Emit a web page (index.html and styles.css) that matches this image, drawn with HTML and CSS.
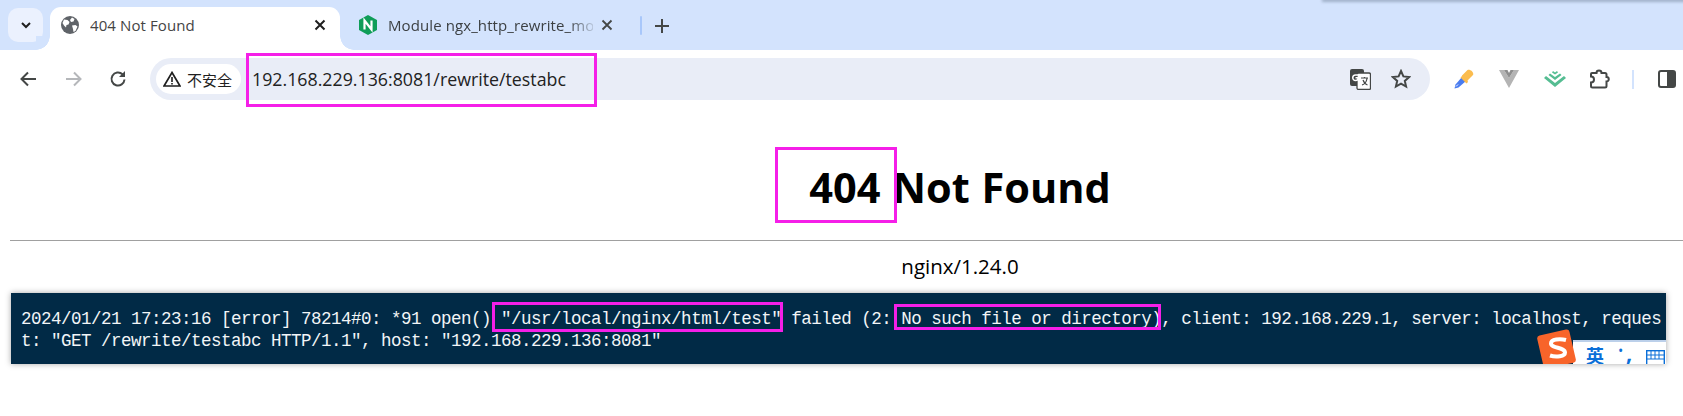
FILE: index.html
```html
<!DOCTYPE html>
<html lang="zh">
<head>
<meta charset="utf-8">
<title>404 Not Found</title>
<link rel="stylesheet" href="styles.css">
</head>
<body>
<div class="window-shadow"></div>
<header class="tabstrip">
  <button class="tab-menu"><svg width="14" height="14" viewBox="0 0 14 14"><path d="M3 5l4 4 4-4" fill="none" stroke="#1f1f1f" stroke-width="2"/></svg></button>
  <div class="tab tab-active">
    <svg class="fav" width="18" height="18" viewBox="0 0 18 18"><circle cx="9" cy="9" r="9" fill="#5f6368"/><path d="M3 3.500l3.500.5 2 2-1 2.500-2 .5-.5 2.500L3 9.500 1.500 7zM11 1.500l2.500 1.500-1 2.500-2.500.5-1-2zM11 9.500l3.500-.5 2 1.500-2 4.500-2 1-.5-3z" fill="#fff"/></svg>
    <span class="tab-title">404 Not Found</span>
    <svg class="tab-close" width="12" height="12" viewBox="0 0 12 12"><path d="M1.500 1.500l9 9m0-9l-9 9" stroke="#1f1f1f" stroke-width="2"/></svg>
  </div>
  <div class="tab tab-idle">
    <svg class="fav" width="18" height="20" viewBox="0 0 18 20"><path d="M9 0l9 5v10l-9 5-9-5V5z" fill="#0f9d58"/><path d="M5.500 14.500v-9l7 9v-9" fill="none" stroke="#fff" stroke-width="2.200"/></svg>
    <span class="tab-title fade">Module ngx_http_rewrite_module</span>
    <svg class="tab-close" width="12" height="12" viewBox="0 0 12 12"><path d="M1.500 1.500l9 9m0-9l-9 9" stroke="#444746" stroke-width="1.800"/></svg>
  </div>
  <span class="tab-sep"></span>
  <svg class="tab-plus" width="14" height="14" viewBox="0 0 14 14"><path d="M7 0v14M0 7h14" stroke="#444746" stroke-width="2"/></svg>
</header>
<nav class="toolbar">
  <div class="nav-icons">
    <svg width="18" height="18" viewBox="0 0 18 18"><path d="M17 9H3M9 2.500L2.500 9 9 15.500" fill="none" stroke="#444746" stroke-width="2"/></svg>
    <svg width="18" height="18" viewBox="0 0 18 18"><path d="M1 9h14M9 2.500L15.500 9 9 15.500" fill="none" stroke="#b5b7ba" stroke-width="2"/></svg>
    <svg class="reload" width="18" height="18" viewBox="0 0 18 18"><path d="M15.500 9.500a6.500 6.500 0 1 1-2-5.200" fill="none" stroke="#444746" stroke-width="2"/><path d="M16 1v6h-6z" fill="#444746"/></svg>
  </div>
  <div class="omnibox">
    <div class="chip">
      <svg width="18" height="16" viewBox="0 0 18 16"><path d="M9 1.500L17 15H1z" fill="none" stroke="#1f1f1f" stroke-width="1.700"/><path d="M9 6v5M9 12v1.600" stroke="#1f1f1f" stroke-width="1.600"/></svg>
      <span>不安全</span>
    </div>
    <span class="url">192.168.229.136:8081/rewrite/testabc</span>
    <svg class="translate" width="21" height="21" viewBox="0 0 21 21"><rect x="0" y="0" width="14" height="17" rx="2" fill="#444746"/><rect x="7" y="4" width="13.500" height="16.500" rx="1.500" fill="#fff" stroke="#444746" stroke-width="1.300"/><path d="M9.500 6h-4a2.500 2.500 0 1 0 0 5.500c2 0 2.800-1 2.800-2.800H5.500" fill="none" stroke="#fff" stroke-width="1.500"/><path d="M11 9h7M14.500 8v1.500M12 16c3-1 4.500-3.500 5-6.500M13 11c1 2.500 3 4.500 4.500 5" fill="none" stroke="#444746" stroke-width="1.200"/></svg>
    <svg class="star" width="20" height="20" viewBox="0 0 20 20"><path d="M10 2l2.400 5.400 5.800.6-4.400 3.900 1.300 5.700L10 14.700l-5.100 2.900 1.300-5.700L1.800 8l5.800-.6z" fill="none" stroke="#444746" stroke-width="2"/></svg>
  </div>
  <div class="ext-icons">
    <svg class="ext" width="20" height="20" viewBox="0 0 20 20"><path d="M0.500 19.500l1-4 6.500-7.500 4 4-7.500 6.500z" fill="#4a7cf0"/><path d="M2 17.500l2-2" stroke="#fff" stroke-width="1"/><path d="M8 6.500l5.500-5.500c2.500-1.500 7 2.500 5.500 5l-5.500 5.500.5 1.500-1.500 1.500-6-6 1.500-1.500z" fill="#fbbc4e"/></svg>
    <svg class="ext" width="20" height="18" viewBox="0 0 20 18"><path d="M0 0h5l5 8 5-8h5L10 18z" fill="#b4b4b4"/><path d="M5 0h3.500L10 3l1.500-3H15l-5 8z" fill="#8e8e8e"/></svg>
    <svg class="ext" width="22" height="16" viewBox="0 0 22 16"><path d="M0 7l11 9 11-9-2-2-9 7L2 5z" fill="#55bd92"/><path d="M4.500 4l6.500 5 6.500-5-1.500-1.500L11 6 6 2.500z" fill="#55bd92"/><path d="M8 1.500l3 2 3-2-1-1.500L11 1.500 9 0z" fill="#55bd92"/></svg>
    <svg class="ext" width="20" height="20" viewBox="0 0 20 20"><path d="M2 4h4.500a2.500 2.500 0 0 1 5 0H15a1.500 1.500 0 0 1 1.500 1.500V8a2.200 2.200 0 0 1 0 4.500V17a1.500 1.500 0 0 1-1.500 1.500H2.500A1.500 1.500 0 0 1 1 17v-3.500a3 3 0 0 0 0-6V5a1 1 0 0 1 1-1z" fill="none" stroke="#444746" stroke-width="2"/></svg>
    <span class="tool-sep"></span>
    <svg class="side" width="18" height="18" viewBox="0 0 18 18"><rect x="1" y="1" width="16" height="16" rx="2" fill="none" stroke="#444746" stroke-width="2"/><rect x="9" y="1" width="8" height="16" fill="#444746"/></svg>
  </div>
</nav>
<main class="page">
  <h1 class="heading"><span class="mark-404">404</span> Not Found</h1>
  <hr class="rule">
  <p class="server">nginx/1.24.0</p>
  <section class="terminal">
    <pre class="log">2024/01/21 17:23:16 [error] 78214#0: *91 open() <span class="mark mark-path">"/usr/local/nginx/html/test"</span> failed (2: <span class="mark mark-err">No such file or directory)</span>, client: 192.168.229.1, server: localhost, request: "GET /rewrite/testabc HTTP/1.1", host: "192.168.229.136:8081"</pre>
    <div class="ime">
      <svg class="ime-logo" width="40" height="40" viewBox="0 0 40 40"><rect x="3" y="3" width="33" height="34" rx="3" fill="#f8642a" transform="rotate(-13 20 20)"/><path d="M29 11c-6-1.500-15-1-15 3.500 0 5 14 3.500 14 9 0 4-9 5-15 3" fill="none" stroke="#fff" stroke-width="4"/></svg>
      <span class="ime-lang">英</span>
      <span class="ime-dot">•</span>
      <span class="ime-comma">,</span>
      <svg class="ime-kbd" width="19" height="14" viewBox="0 0 19 14"><rect x=".7" y=".7" width="17.600" height="14" fill="none" stroke="#0b6fd8" stroke-width="1.400"/><path d="M1 5h17M1 9h17M5 1v8M9 1v8M13 1v8" stroke="#0b6fd8"/></svg>
    </div>
  </section>
</main>
</body>
</html>
```
FILE: styles.css
```css
*, *::before, *::after { box-sizing: border-box; }
html, body { margin: 0; padding: 0; width: 1683px; height: 416px; overflow: hidden; background: #fff; }
body { font-family: "Open Sans", "Noto Sans CJK SC", sans-serif; position: relative; }
svg { display: block; flex: none; }

.window-shadow { position: absolute; top: -2px; left: 1322px; right: -10px; height: 4px; background: #9fb0c8; filter: blur(1.500px); z-index: 2; }

.tabstrip { height: 50px; background: #d3e3fd; display: flex; align-items: flex-end; padding-left: 8px; position: relative; }
.tab-menu { width: 35px; height: 34px; margin-bottom: 8px; border: 0; padding: 0; border-radius: 10px; background: #ebf1fe; display: flex; align-items: center; justify-content: center; }
.tab { height: 43px; display: flex; align-items: center; padding-bottom: 8px; font-size: 15px; color: #3c4043; }
.tab-active { width: 290px; margin-left: 7px; padding-left: 11px; padding-right: 14px; background: #fff; border-radius: 11px 11px 0 0; color: #444; position: relative; }
.tab-active::before, .tab-active::after { content: ""; position: absolute; bottom: 0; width: 14px; height: 14px; }
.tab-active::before { left: -14px; background: radial-gradient(circle at 0 0, #d3e3fd 13.500px, #fff 14px); }
.tab-active::after { right: -14px; background: radial-gradient(circle at 100% 0, #d3e3fd 13.500px, #fff 14px); }
.tab-idle { width: 291px; padding-left: 19px; padding-right: 18px; }
.fav { margin-right: 11px; }
.tab-title { flex: 1; white-space: nowrap; overflow: hidden; font-size: 15px; letter-spacing: .1px; }
.fade { -webkit-mask-image: linear-gradient(90deg, #000 180px, transparent 210px); mask-image: linear-gradient(90deg, #000 180px, transparent 210px); }
.tab-close { margin-left: 8px; }
.tab-sep { width: 2px; height: 19px; background: #a8c7fa; margin: 0 0 15px 9px; border-radius: 1px; }
.tab-plus { margin: 0 0 17px 13px; }

.toolbar { height: 50px; background: #fff; display: flex; align-items: flex-start; border-radius: 10px 0 0 0; position: relative; padding-top: 8px; }
.nav-icons { width: 150px; height: 42px; display: flex; align-items: center; padding-left: 19px; gap: 28px; flex: none; }
.reload { margin-left: -2px; }
.omnibox { width: 1280px; height: 42px; border-radius: 21px; background: #e9edf7; display: flex; align-items: center; padding-left: 6px; flex: none; }
.chip { width: 85px; height: 30px; border-radius: 15px; background: #fff; display: flex; align-items: center; padding-left: 7px; gap: 6px; font-size: 15px; color: #1f1f1f; flex: none; white-space: nowrap; }
.chip span { font-family: "Noto Sans CJK SC", sans-serif; }
.url { margin-left: 11px; font-size: 17.800px; color: #222; position: relative; white-space: nowrap; width: 1098px; flex: none; }
.url::after { content: ""; position: absolute; left: -6px; top: -14px; width: 351px; height: 54px; border: 3px solid #f51fe8; }
.star { margin-left: 20px; }
.ext-icons { display: flex; align-items: center; height: 42px; padding-left: 24px; flex: none; }
.ext:nth-child(2), .ext:nth-child(3) { margin-left: 25px; }
.ext:nth-child(4) { margin-left: 24px; }
.tool-sep { width: 2px; height: 19px; background: #d3e3fd; margin-left: 22px; }
.side { margin-left: 24px; }

.page { width: 1900px; margin-left: 10px; }
.heading { margin: 0; height: 140px; padding-top: 60px; text-align: center; font-size: 41.500px; line-height: 55px; font-weight: 700; word-spacing: 1px; color: #000; }
.mark-404 { position: relative; }
.mark-404::after { content: ""; position: absolute; left: -34px; top: -12px; width: 122px; height: 76px; border: 3px solid #f51fe8; }
.rule { margin: 0; border: 0; border-top: 1px solid #a0a0a0; height: 1px; }
.server { margin: 0; height: 52px; padding-top: 10px; text-align: center; font-size: 20.500px; line-height: 30px; color: #000; }

.terminal { width: 1655px; height: 71px; margin-left: 1px; background: #012a46; position: relative; box-shadow: 0 0 6px rgba(0,0,0,.35); overflow: hidden; }
.log { margin: 0; padding: 15px 0 0 10px; width: 1652px; font-family: "Liberation Mono", monospace; font-size: 17.500px; letter-spacing: -.5px; line-height: 22px; color: #f2f5f7; white-space: pre-wrap; word-break: break-all; }
.mark { position: relative; }
.mark::after { content: ""; position: absolute; border: 3px solid #f51fe8; }
.mark-path::after { left: -9px; right: -2px; top: -7px; bottom: -3px; }
.mark-err::after { left: -7px; right: 0; top: -5px; bottom: -1px; }

.ime { position: absolute; right: 0; top: 47px; width: 93px; height: 24px; background: #fff; border-top: 2px solid #bcd0ea; display: flex; align-items: center; color: #0b6fd8; }
.ime-logo { position: absolute; left: -36px; top: -13px; }
.ime-lang { position: absolute; left: 13px; top: 1px; font-family: "Noto Sans CJK SC", sans-serif; font-size: 18px; line-height: 24px; font-weight: 700; }
.ime-dot { position: absolute; left: 45px; top: 0; font-size: 14px; line-height: 18px; }
.ime-comma { position: absolute; left: 53px; top: -3px; font-size: 22px; line-height: 26px; font-weight: 700; }
.ime-kbd { position: absolute; left: 73px; top: 8px; }
```
